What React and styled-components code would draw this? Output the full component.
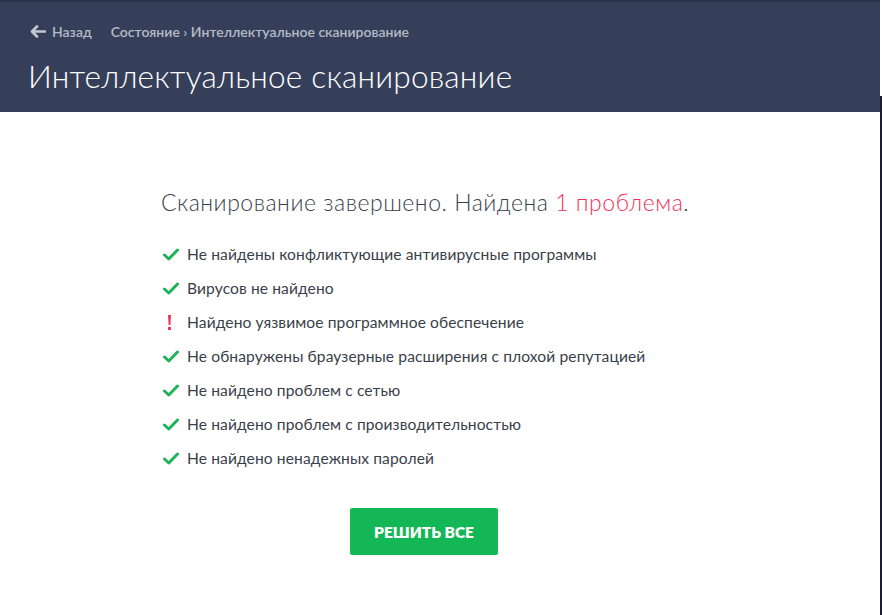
import React from "react";
import styled, { createGlobalStyle } from "styled-components";

const Global = createGlobalStyle`
  html, body { margin: 0; padding: 0; background: #ffffff; }
  body { font-family: "Lato", "Open Sans", sans-serif; }
  #root { width: 882px; height: 615px; overflow: hidden; }
`;

const Frame = styled.div`
  display: flex;
  width: 882px;
  height: 615px;
`;

const Page = styled.div`
  width: 880px;
  display: flex;
  flex-direction: column;
  background: #ffffff;
`;

const Edge = styled.div`
  width: 2px;
  display: flex;
  flex-direction: column;
  background: #1b1d2e;
`;

const EdgeTop = styled.div`
  height: 96px;
  background: #ffffff;
`;

const Header = styled.header`
  height: 110px;
  background: #363f5a;
  border-top: 2px solid #2c3249;
  padding: 0 28px;
  display: flex;
  flex-direction: column;
`;

const Crumbs = styled.nav`
  display: flex;
  align-items: center;
  height: 14px;
  margin-top: 22px;
  padding-left: 2px;
  font-size: 14px;
  font-weight: 600;
  color: #b5bac7;
  letter-spacing: 0;
`;

const Back = styled.span`
  display: flex;
  align-items: center;
  gap: 6px;
  margin-right: 19px;
`;

const Title = styled.h1`
  margin: 18px 0 0;
  font-size: 31.6px;
  font-weight: 300;
  color: #ffffff;
  line-height: 40px;
  letter-spacing: 0.2px;
`;

const Body = styled.main`
  flex: 1;
  display: flex;
  flex-direction: column;
  padding: 76px 0 0 161px;
`;

const Block = styled.section`
  width: 528px;
  display: flex;
  flex-direction: column;
`;

const Heading = styled.h2`
  margin: 0;
  font-size: 23px;
  font-weight: 300;
  color: #3a3f4c;
  line-height: 28px;
  letter-spacing: 0.52px;
  white-space: nowrap;
`;

const Accent = styled.span`
  color: #ef3359;
`;

const List = styled.ul`
  list-style: none;
  margin: 28px 0 0;
  padding: 0;
  display: flex;
  flex-direction: column;
  gap: 14px;
`;

const Item = styled.li`
  display: flex;
  align-items: center;
  height: 20px;
  font-size: 15.6px;
  color: #3b3f4a;
  letter-spacing: 0.1px;
  white-space: nowrap;
`;

const IconBox = styled.span`
  width: 26px;
  display: flex;
  align-items: center;
  padding-left: ${(p) => (p.$warn ? "6px" : "2px")};
  box-sizing: border-box;
`;

const Button = styled.button`
  align-self: center;
  margin-top: 40px;
  margin-left: -2px;
  width: 148px;
  height: 47px;
  border: none;
  border-radius: 2px;
  background: #13b755;
  color: #ffffff;
  font-family: "Lato", sans-serif;
  font-weight: 800;
  font-size: 15.5px;
  letter-spacing: 0;
  text-transform: uppercase;
`;

const Check = () => (
  <svg width="16" height="13" viewBox="0 0 16 13">
    <path d="M1.5 7 L5.8 11 L14.5 2" fill="none" stroke="#1fb35a" strokeWidth="3" strokeLinecap="round" strokeLinejoin="round" />
  </svg>
);

const Bang = () => (
  <svg width="5" height="17" viewBox="0 0 5 17">
    <path d="M1 1 H4 L3.4 11 H1.6 Z" fill="#ee3559" />
    <rect x="1" y="13" width="3" height="3" fill="#ee3559" />
  </svg>
);

const Arrow = () => (
  <svg width="16" height="13" viewBox="0 0 16 13">
    <path d="M7 1.5 L2 6.5 L7 11.5 M2.5 6.5 H15" fill="none" stroke="#c3c7d2" strokeWidth="2.6" strokeLinecap="round" strokeLinejoin="round" />
  </svg>
);

const items = [
  { ok: true, text: "Не найдены конфликтующие антивирусные программы" },
  { ok: true, text: "Вирусов не найдено" },
  { ok: false, text: "Найдено уязвимое программное обеспечение" },
  { ok: true, text: "Не обнаружены браузерные расширения с плохой репутацией" },
  { ok: true, text: "Не найдено проблем с сетью" },
  { ok: true, text: "Не найдено проблем с производительностью" },
  { ok: true, text: "Не найдено ненадежных паролей" },
];

export default function App() {
  return (
    <Frame>
      <Global />
      <Page>
        <Header>
          <Crumbs>
            <Back>
              <Arrow />
              Назад
            </Back>
            Состояние › Интеллектуальное сканирование
          </Crumbs>
          <Title>Интеллектуальное сканирование</Title>
        </Header>
        <Body>
          <Block>
            <Heading>
              Сканирование завершено. Найдена <Accent>1 проблема</Accent>.
            </Heading>
            <List>
              {items.map((it) => (
                <Item key={it.text}>
                  <IconBox $warn={!it.ok}>{it.ok ? <Check /> : <Bang />}</IconBox>
                  {it.text}
                </Item>
              ))}
            </List>
            <Button>Решить все</Button>
          </Block>
        </Body>
      </Page>
      <Edge>
        <EdgeTop />
      </Edge>
    </Frame>
  );
}
